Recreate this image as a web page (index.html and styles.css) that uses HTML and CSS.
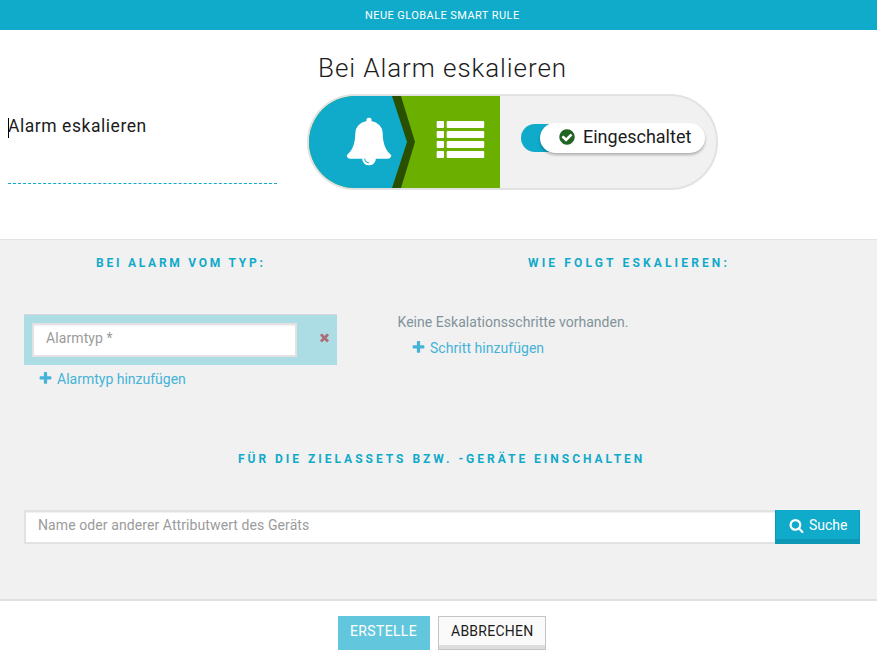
FILE: index.html
```html
<!DOCTYPE html>
<html lang="de">
<head>
<meta charset="utf-8">
<title>Neue globale Smart Rule</title>
<link rel="stylesheet" href="styles.css">
</head>
<body>
<header class="topbar"><span class="t-top">NEUE GLOBALE SMART RULE</span></header>
<section class="intro">
  <div class="name"><span class="caret"></span><span class="t-name">Alarm eskalieren</span></div>
  <div class="rule">
    <h1><span class="t-title">Bei Alarm eskalieren</span></h1>
    <div class="capsule">
      <svg class="flow" viewBox="0 0 191 92">
        <rect width="191" height="92" fill="#6bb000"/>
        <path d="M83 0H92L106 46L92 92H83Z" fill="#294f00"/>
        <path d="M0 0H83L98 46L83 92H0Z" fill="#10aaca"/>
        <svg x="36" y="21.5" width="48" height="48" viewBox="0 0 1792 1792"><path fill="#fff" d="M912 1696q0-16-16-16-59 0-101.500-42.500t-42.500-101.500q0-16-16-16t-16 16q0 73 51.500 124.500t124.500 51.500q16 0 16-16zm816-288q0 52-38 90t-90 38h-448q0 106-75 181t-181 75-181-75-75-181h-448q-52 0-90-38t-38-90q50-42 91-88t85-119.500 74.500-158.500 50-206 19.500-260q0-152 117-282.500t307-158.500q-8-19-8-39 0-40 28-68t68-28 68 28 28 68q0 20-8 39 190 28 307 158.500t117 282.500q0 139 19.500 260t50 206 74.500 158.500 85 119.500 91 88z"/></svg>
        <g fill="#fff">
          <rect x="127.700" y="25" width="7.300" height="7" rx="1"/><rect x="137.700" y="25" width="37.500" height="7" rx="1"/>
          <rect x="127.700" y="35" width="7.300" height="7" rx="1"/><rect x="137.700" y="35" width="37.500" height="7" rx="1"/>
          <rect x="127.700" y="45" width="7.300" height="7" rx="1"/><rect x="137.700" y="45" width="37.500" height="7" rx="1"/>
          <rect x="127.700" y="55" width="7.300" height="7" rx="1"/><rect x="137.700" y="55" width="37.500" height="7" rx="1"/>
        </g>
      </svg>
      <div class="toggle"><div class="knob">
        <svg class="check" viewBox="0 0 1792 1792"><path d="M1412 734q0-28-18-46l-91-90q-19-19-45-19t-45 19l-408 407-226-226q-19-19-45-19t-45 19l-91 90q-18 18-18 46 0 27 18 45l362 362q19 19 45 19 27 0 46-19l543-543q18-18 18-45zm252 162q0 209-103 385.500t-279.500 279.500-385.500 103-385.500-103-279.500-279.500-103-385.500 103-385.500 279.500-279.500 385.500-103 385.500 103 279.500 279.500 103 385.500z"/></svg>
        <span class="t-on">Eingeschaltet</span>
      </div></div>
    </div>
  </div>
</section>
<main>
  <div class="columns">
    <section class="when">
      <h2><span class="t-when">BEI ALARM VOM TYP:</span></h2>
      <div class="item">
        <div class="field"><span class="t-type">Alarmtyp *</span></div>
        <svg class="remove" viewBox="0 0 1792 1792"><path d="M1490 1322q0 40-28 68l-136 136q-28 28-68 28t-68-28l-294-294-294 294q-28 28-68 28t-68-28l-136-136q-28-28-28-68t28-68l294-294-294-294q-28-28-28-68t28-68l136-136q28-28 68-28t68 28l294 294 294-294q28-28 68-28t68 28l136 136q28 28 28 68t-28 68l-294 294 294 294q28 28 28 68z"/></svg>
      </div>
      <div class="add"><svg viewBox="0 0 1792 1792"><path d="M1600 736v192q0 40-28 68t-68 28h-416v416q0 40-28 68t-68 28h-192q-40 0-68-28t-28-68v-416h-416q-40 0-68-28t-28-68v-192q0-40 28-68t68-28h416v-416q0-40 28-68t68-28h192q40 0 68 28t28 68v416h416q40 0 68 28t28 68z"/></svg><span class="t-add">Alarmtyp hinzufügen</span></div>
    </section>
    <section class="then">
      <h2><span class="t-then">WIE FOLGT ESKALIEREN:</span></h2>
      <p><span class="t-none">Keine Eskalationsschritte vorhanden.</span></p>
      <div class="add"><svg viewBox="0 0 1792 1792"><path d="M1600 736v192q0 40-28 68t-68 28h-416v416q0 40-28 68t-68 28h-192q-40 0-68-28t-28-68v-416h-416q-40 0-68-28t-28-68v-192q0-40 28-68t68-28h416v-416q0-40 28-68t68-28h192q40 0 68 28t28 68v416h416q40 0 68 28t28 68z"/></svg><span class="t-step">Schritt hinzufügen</span></div>
    </section>
  </div>
  <section class="targets">
    <h2><span class="t-target">FÜR DIE ZIELASSETS BZW. -GERÄTE EINSCHALTEN</span></h2>
    <div class="search">
      <div class="field"><span class="t-search">Name oder anderer Attributwert des Geräts</span></div>
      <div class="search-btn"><svg viewBox="0 0 1792 1792"><path d="M1216 832q0-185-131.500-316.500t-316.500-131.500-316.500 131.500-131.500 316.500 131.500 316.500 316.500 131.500 316.500-131.500 131.500-316.500zm512 832q0 52-38 90t-90 38q-54 0-90-38l-343-342q-179 124-399 124-143 0-273.500-55.500t-225-150-150-225-55.500-273.500 55.500-273.500 150-225 225-150 273.500-55.500 273.500 55.500 225 150 150 225 55.500 273.500q0 220-124 399l343 343q37 37 37 90z"/></svg><span class="t-btn">Suche</span></div>
    </div>
  </section>
</main>
<footer>
  <div class="create"><span class="t-create">ERSTELLE</span></div>
  <div class="cancel"><span class="t-cancel">ABBRECHEN</span></div>
</footer>
</body>
</html>
```
FILE: styles.css
```css
* { box-sizing: border-box; }
body { margin: 0; width: 877px; height: 663px; overflow: hidden; background: #fff; color: #1c1c1c; font: 14px/20px Roboto, sans-serif; white-space: nowrap; }
svg { display: block; flex: none; }
h1, h2, p { margin: 0; }
.topbar { height: 30px; display: flex; justify-content: flex-start; padding-left: 365px; background: #10aaca; color: #fff; font-size: 11px; line-height: 31px; }
.intro { height: 210px; display: flex; border-bottom: 1px solid #e2e2e2; }
.name { width: 269px; height: 69px; margin: 85px 0 0 8px; display: flex; border-bottom: 1px dashed #10aaca; font-size: 17.5px; line-height: 23px; }
.caret { width: 1px; height: 20px; margin: 3px -1px 0 0; background: #000; }
.rule { margin-left: 30px; width: 411px; }
.rule h1 { height: 64px; padding: 18px 0 0 11px; font-size: 26px; line-height: 40px; font-weight: 300; }
.capsule { width: 411px; height: 96px; display: flex; border: 2px solid #e2e2e2; border-radius: 48px; background: #f1f1f1; overflow: hidden; }
.flow { width: 191px; height: 92px; }
.toggle { width: 184px; height: 28px; margin: 28px 0 0 21px; padding-left: 19px; border-radius: 14px; background: linear-gradient(90deg, #10aaca 40px, transparent 40px); }
.knob { width: 165px; height: 30px; margin-top: -1px; padding-left: 18px; display: flex; border-radius: 15px; background: #fff; box-shadow: 0 2px 3px rgba(0,0,0,.28); font-size: 18px; line-height: 28px; }
.check { width: 18px; height: 18px; margin: 5px 7px 0 0; fill: #216423; }
main { height: 361px; background: #f1f1f1; border-bottom: 2px solid #e0e0e0; }
.columns { height: 196px; display: flex; }
.when { width: 313px; margin-left: 24px; }
.then { margin-left: 60px; width: 462px; }
h2 { color: #10aaca; font-size: 12px; line-height: 20px; font-weight: 700; padding-top: 13px; height: 74px; }
.when h2 { padding-left: 72px; }
.then h2 { padding-left: 131px; }
.item { height: 51px; display: flex; padding: 8px 6px 0 8px; background: #addde4; border-top: 1px solid #d8d8d8; justify-content: space-between; }
.field { height: 34px; border: 2px solid #e2e2e2; background: #fff; box-shadow: inset 0 1px 1px rgba(0,0,0,.06); color: #9b9b9b; padding-left: 12px; line-height: 26px; }
.item .field { width: 265px; }
.remove { width: 13px; height: 13px; margin-top: 8px; fill: #ad6d76; }
.add { display: flex; gap: 4px; padding-left: 14px; height: 28px; line-height: 28px; color: #45b3d8; }
.add svg { width: 15px; height: 15px; margin-top: 6px; fill: #45b3d8; }
.then p { color: #82939a; height: 20px; line-height: 16px; padding-left: 0.5px; }
.then .add { padding-left: 14px; }
.targets h2 { padding-left: 238px; }
.search { margin-left: 24px; width: 836px; display: flex; }
.search .field { width: 751px; border-right: 0; }
.search-btn { width: 85px; height: 34px; display: flex; gap: 5px; padding-left: 13px; background: #10aaca; border: 1px solid #0d98b5; border-top-color: #10aaca; box-shadow: inset 0 -4px #0d98b5; color: #fff; line-height: 29px; }
.search-btn svg { width: 15px; height: 15px; margin-top: 7px; fill: #fff; }
footer { height: 62px; display: flex; gap: 8px; padding: 15px 0 0 338px; }
.create { width: 92px; height: 34px; padding-left: 12px; background: #62c7dc; color: #fff; line-height: 31px; }
.cancel { width: 108px; height: 34px; padding-left: 12px; border: 1px solid #c4c4c4; background: #fafafa; box-shadow: inset 0 -4px #ddd; line-height: 29px; }
.t-top { letter-spacing: .43px; }
.t-name { letter-spacing: .55px; }
.t-title { letter-spacing: .93px; }
.t-when { letter-spacing: 2.75px; }
.t-then { letter-spacing: 3.15px; }
.t-target { letter-spacing: 2.98px; }
.t-type { letter-spacing: .1px; }
.t-none { letter-spacing: .04px; }
.t-step { letter-spacing: .05px; }
.t-search { letter-spacing: .09px; }
.t-create { letter-spacing: .35px; }
.t-cancel { letter-spacing: .25px; }
```
